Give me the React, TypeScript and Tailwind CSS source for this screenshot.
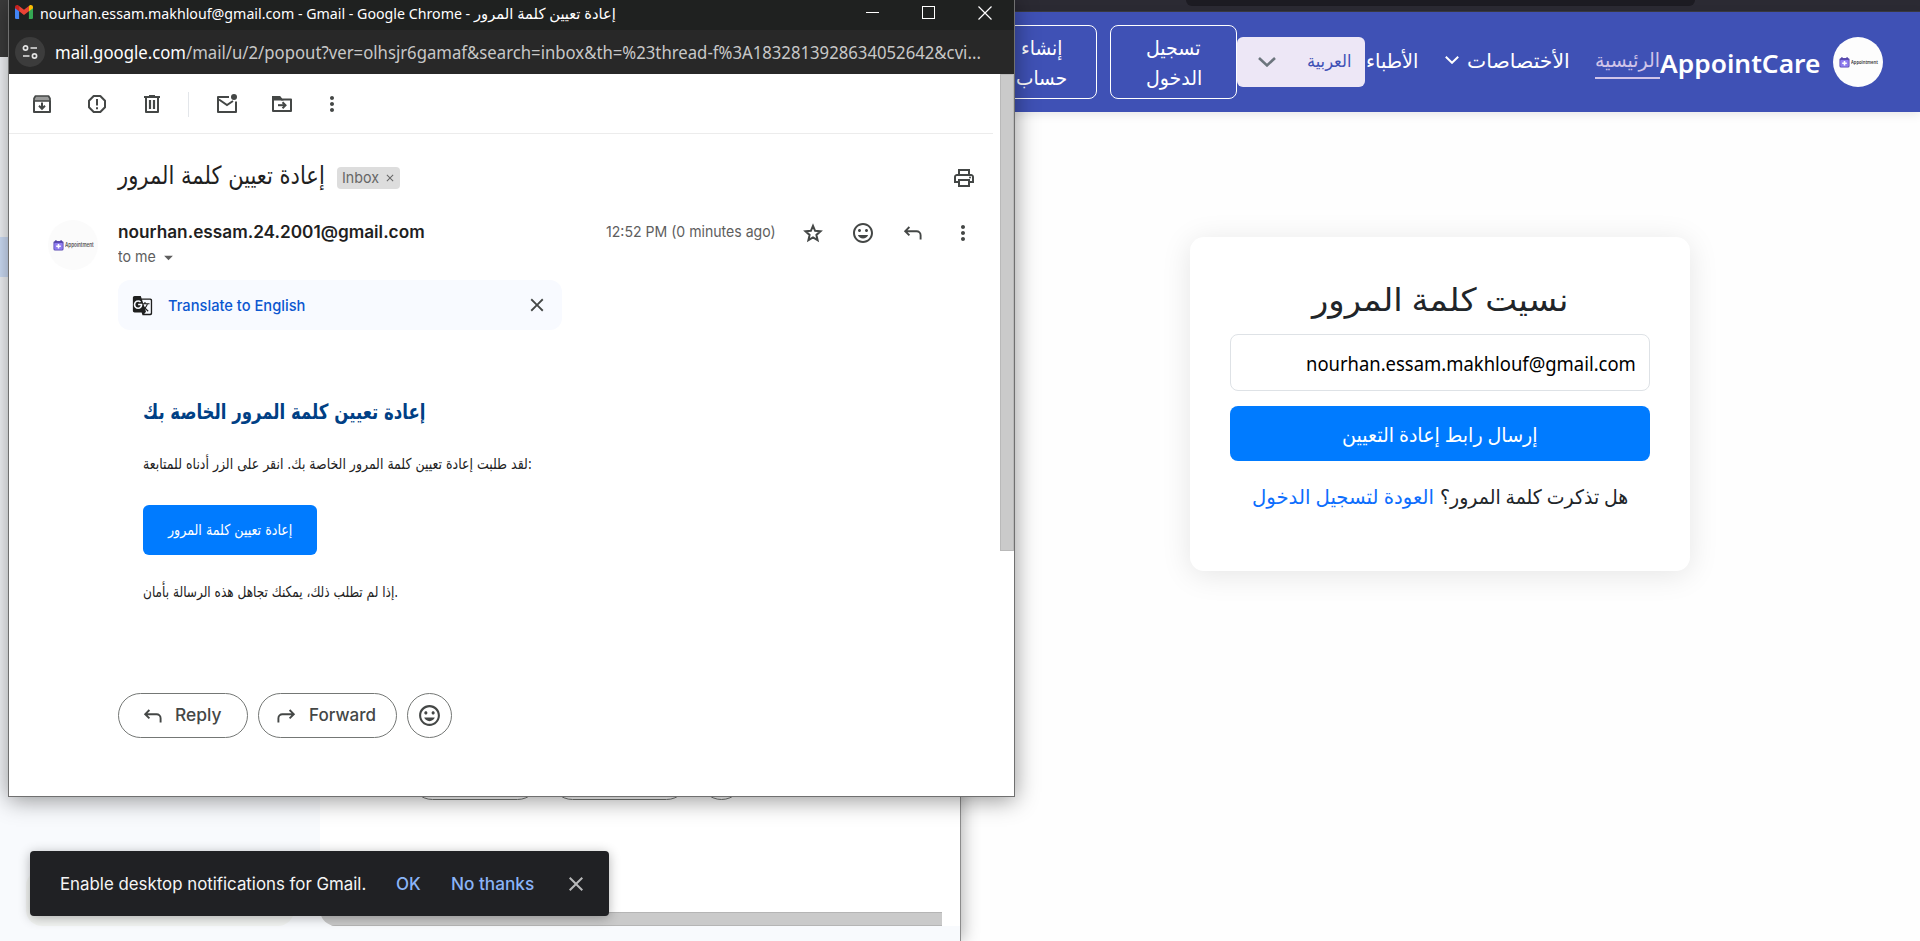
import { useLayoutEffect, useRef, useState, type ReactNode } from 'react';
import {
  MdMoreVert,
  MdOutlinePrint,
  MdOutlineInsertEmoticon,
  MdClose,
  MdArrowDropDown,
  MdGTranslate,
} from 'react-icons/md';

/** One line of text, condensed or widened to fill the width of its box. */
function Fit({ className, children, rtl = false }: { className: string; children: ReactNode; rtl?: boolean }) {
  const box = useRef<HTMLDivElement>(null);
  const line = useRef<HTMLSpanElement>(null);
  const [scale, setScale] = useState(1);
  useLayoutEffect(() => {
    if (box.current && line.current && line.current.offsetWidth > 0) {
      setScale(box.current.clientWidth / line.current.offsetWidth);
    }
  }, []);
  return (
    <div ref={box} dir="ltr" className={`shrink-0 whitespace-nowrap ${className}`}>
      <span
        ref={line}
        dir={rtl ? 'rtl' : 'ltr'}
        className="inline-block origin-left"
        style={{ transform: `scaleX(${scale})` }}
      >
        {children}
      </span>
    </div>
  );
}

function ToolIcon({ className = '', children }: { className?: string; children: ReactNode }) {
  return (
    <svg viewBox="0 0 24 24" className={`h-6 w-6 shrink-0 ${className}`} fill="none" stroke="currentColor" strokeWidth="2">
      {children}
    </svg>
  );
}

function ReplyArrow({ className = '' }: { className?: string }) {
  return (
    <svg viewBox="0 0 20 20" className={`h-5 w-5 shrink-0 ${className}`} fill="none" stroke="currentColor" strokeWidth="1.9">
      <path d="M6.4 4 2.2 8.200l4.200 4.200M2.600 8.200h11a4 4 0 0 1 4 4v4.200" />
    </svg>
  );
}

function BrandMark({ className = '' }: { className?: string }) {
  return (
    <svg viewBox="0 0 12 12" className={className}>
      <rect x="0.5" y="1" width="11" height="10.5" rx="1.8" fill="#5a4bb0" />
      <rect x="1.4" y="3.2" width="9.2" height="7.4" rx="1" fill="#8f7cf0" />
      <path d="M6 4.4v5M3.5 6.9h5" stroke="#fff" strokeWidth="1.7" />
      <path d="M3.2 0v2M8.8 0v2" stroke="#4c3fa0" strokeWidth="1.2" />
    </svg>
  );
}

function GmailMark() {
  return (
    <svg viewBox="0 0 18 14" className="h-[14px] w-[18px] shrink-0">
      <path d="M0 2.2 4.1 5v9H1.2A1.2 1.2 0 0 1 0 12.8z" fill="#4285f4" />
      <path d="M18 2.2 13.9 5v9h2.9a1.2 1.2 0 0 0 1.2-1.2z" fill="#34a853" />
      <path d="M4.1 1 9 4.8 13.9 1v5.2L9 10 4.1 6.2z" fill="#ea4335" />
      <path d="M0 2.2C0 .3 2-.5 3.5.5l.6.5v5.2L0 3.2z" fill="#c5221f" />
      <path d="M18 2.2c0-1.9-2-2.7-3.5-1.7l-.6.5v5.2L18 3.2z" fill="#fbbc04" />
    </svg>
  );
}

function BookingSite() {
  return (
    <div dir="rtl" className="absolute top-0 right-0 flex h-[941px] w-[960px] flex-col bg-[#fefefe] font-['Noto_Sans','DejaVu_Sans',sans-serif]">
      <div className="flex h-3 justify-start border-b border-[#3a3a42] bg-[#2b2a33] pr-[225px]">
        <div className="h-[6px] w-[509px] rounded-b-md bg-[#1c1b22]" />
      </div>
      <nav className="flex h-[100px] shrink-0 items-center bg-[#3f51b5] pr-[37px] text-white shadow-[0_2px_10px_rgba(0,0,0,0.1)]">
        <div className="flex h-[50px] w-[50px] items-center justify-center gap-px rounded-full bg-[#fdfdfd]" dir="ltr">
          <BrandMark className="h-[11px] w-[11px]" />
          <Fit className="w-[27px] text-[6px] leading-none font-semibold text-[#333]">Appointment</Fit>
        </div>
        <Fit className="mr-[13px] w-[160px] pt-px text-[26px] leading-[50px] font-semibold">AppointCare</Fit>
        <div className="h-[34px] w-[65px] border-b-2 border-[#d1c4e9] text-[#d1c4e9]">
          <Fit rtl className="w-[65px] text-[20px] leading-[30px]">الرئيسية</Fit>
        </div>
        <Fit rtl className="mr-[25px] w-[103px] pb-[2px] text-[20px] leading-[34px]">الأختصاصات</Fit>
        <svg viewBox="0 0 14 8" className="mr-2 mb-1 h-2 w-[14px]" fill="none" stroke="currentColor" strokeWidth="2">
          <path d="m.8.8 6.2 6 6.2-6" />
        </svg>
        <Fit rtl className="mr-[27px] w-[52px] pb-[2px] text-[20px] leading-[34px]">الأطباء</Fit>
        <div className="mr-px flex h-[50px] w-[128px] items-center justify-between rounded-md bg-[#ede7f6] pr-[14px] pl-[21px] text-[#3f51b5]">
          <Fit rtl className="w-[44px] pb-[3px] text-[17px] leading-[34px]">العربية</Fit>
          <svg viewBox="0 0 18 10" className="h-[10px] w-[18px] text-[#6c757d]" fill="none" stroke="currentColor" strokeWidth="2.6">
            <path d="m1 1 8 7.4L17 1" />
          </svg>
        </div>
        <button className="flex h-[74px] w-[127px] flex-col items-center justify-center rounded-lg border border-white pt-[2px] text-[20px] leading-[30px]">
          <Fit rtl className="w-[55px]">تسجيل</Fit>
          <Fit rtl className="w-[56px]">الدخول</Fit>
        </button>
        <button className="mr-[13px] flex h-[74px] w-[112px] flex-col items-center justify-center rounded-lg border border-white pt-[2px] text-[20px] leading-[30px]">
          <Fit rtl className="w-[41px]">إنشاء</Fit>
          <Fit rtl className="w-[51px]">حساب</Fit>
        </button>
      </nav>
      <main className="flex pt-[125px] pr-[230px]">
        <section className="flex h-[334px] w-[500px] flex-col items-center rounded-[14px] bg-white px-10 pt-[39px] shadow-[0_4px_30px_rgba(0,0,0,0.1)]">
          <Fit rtl className="h-[58px] w-[256px] text-[32px] leading-[46px] text-[#212529]">نسيت كلمة المرور</Fit>
          <div dir="ltr" className="flex h-[57px] w-full items-center justify-end rounded-lg border border-[#dee2e6] pt-[2px] pr-[13px]">
            <Fit className="w-[330px] text-[20px] text-black">nourhan.essam.makhlouf@gmail.com</Fit>
          </div>
          <button className="mt-[15px] flex h-[55px] w-full items-center justify-center rounded-lg bg-[#007bff] pt-[2px] text-white">
            <Fit rtl className="w-[196px] text-[20px] leading-[34px]">إرسال رابط إعادة التعيين</Fit>
          </button>
          <div className="mt-[19px] flex gap-[6px] text-[20px] leading-[34px]">
            <Fit rtl className="w-[188px] text-[#212529]">هل تذكرت كلمة المرور؟</Fit>
            <Fit rtl className="w-[182px] text-[#0d6efd]">العودة لتسجيل الدخول</Fit>
          </div>
        </section>
      </main>
    </div>
  );
}

function InboxWindow() {
  return (
    <div className="absolute top-0 left-0 flex h-[941px] w-[961px] flex-col border-r border-[#8c8c8c] bg-[#f8fafd] shadow-[2px_0_16px_rgba(0,0,0,0.3)]">
      <div className="h-[57px] shrink-0 bg-[#3c3c3c]" />
      <div className="flex h-[869px]">
        <div className="flex w-[320px] flex-col justify-between pt-[180px]">
          <div className="h-10 bg-[#d3e3fd]" />
          <div className="ml-[26px] h-14 w-[268px] rounded-2xl bg-[#f2f4f2]" />
        </div>
        <div className="flex flex-1 flex-col justify-end overflow-hidden rounded-bl-2xl bg-white">
          <div className="mb-28 ml-[90px] flex gap-[10px]">
            <div className="h-[45px] w-[130px] rounded-full border border-[#747775]" />
            <div className="h-[45px] w-[139px] rounded-full border border-[#747775]" />
            <div className="h-[45px] w-[45px] rounded-full border border-[#747775]" />
          </div>
          <div className="mr-[18px] h-[14px] shrink-0 border-y border-[#b5b5b5] bg-[#cacaca]" />
        </div>
      </div>
    </div>
  );
}

function MailToolbar() {
  return (
    <div className="mr-[7px] flex h-[60px] shrink-0 items-center border-b border-[#ececec] pt-px pl-[20.5px] text-[24px]">
      <ToolIcon>
        <path d="M4 8.500V20h16V8.500" strokeLinejoin="round" />
        <path d="M5.500 4h13L20 6.500V9H4V6.500z" fill="#9a9b9a" strokeWidth="1.700" strokeLinejoin="round" />
        <path d="M12 10.500v5.500" />
        <path d="m9 13.800 3 3 3-3" />
      </ToolIcon>
      <ToolIcon className="ml-[31px]">
        <path d="M8.700 4h6.600L20 8.700v6.600L15.300 20H8.700L4 15.300V8.700z" strokeLinejoin="round" />
        <path d="M12 7v6.500M12 15.200v2" />
      </ToolIcon>
      <ToolIcon className="ml-[31px]">
        <path d="M6 5.500V20h12V5.500M4 5h16M9 4h6" strokeLinejoin="round" />
        <path d="M10 8v9M14 8v9" strokeWidth="2.200" />
      </ToolIcon>
      <div className="ml-[24px] h-[25px] w-px bg-[#e3e6ea]" />
      <ToolIcon className="ml-[26px]">
        <path d="M14 5H3v15h18V9.500" strokeLinejoin="round" />
        <path d="m4 7.500 8 5.500 6-4" />
        <circle cx="19" cy="5" r="3" fill="currentColor" stroke="none" />
      </ToolIcon>
      <ToolIcon className="ml-[31px]">
        <path d="M3 19V5h6.500l2 2.500H21V19z" strokeLinejoin="round" />
        <path d="M3 5h6.500l2 2.500H3z" fill="currentColor" />
        <path d="M8 13.200h7" />
        <path d="m12.500 10.200 3 3-3 3" />
      </ToolIcon>
      <MdMoreVert className="ml-[26px]" />
    </div>
  );
}

function MailPopup() {
  return (
    <div className="absolute top-0 left-[8px] flex h-[797px] w-[1007px] flex-col border-x border-b border-[#707070] bg-white shadow-[0_3px_22px_rgba(0,0,0,0.42)]">
      <div className="flex h-[30px] shrink-0 items-center bg-[#1f2120] pr-[22px] pl-[6px] text-white">
        <div className="-mt-[6px] flex">
          <GmailMark />
        </div>
        <div className="-mt-[5px] ml-[7px] flex gap-1 font-['Noto_Sans','DejaVu_Sans',sans-serif] text-[15px] leading-[24px]">
          <Fit className="w-[430px]">nourhan.essam.makhlouf@gmail.com - Gmail - Google Chrome -</Fit>
          <Fit rtl className="w-[142px]">إعادة تعيين كلمة المرور</Fit>
        </div>
        <div className="-mt-[5px] ml-auto flex items-center gap-[43px]">
          <div className="h-px w-[13px] bg-white" />
          <div className="h-[13px] w-[13px] border border-white" />
          <svg viewBox="0 0 14 14" className="h-[14px] w-[14px]" stroke="#fff" strokeWidth="1.2">
            <path d="m.5.5 13 13M13.500.5l-13 13" />
          </svg>
        </div>
      </div>
      <div className="flex h-[44px] shrink-0 items-center bg-[#282828] pl-[6px] font-['Noto_Sans',sans-serif]">
        <div className="flex h-[30px] w-[30px] items-center justify-center rounded-full bg-[#3c3c3c]">
          <svg viewBox="0 0 16 16" className="h-4 w-4" fill="none" stroke="#e3e3e3" strokeWidth="1.7">
            <circle cx="3.500" cy="4" r="2.100" />
            <path d="M8.500 4H15M1 12h6.500" />
            <circle cx="12.500" cy="12" r="2.100" />
          </svg>
        </div>
        <Fit className="ml-[10px] w-[926px] pt-px text-[18px] text-[#c7c7c7]">
          <span className="text-white">mail.google.com</span>
          /mail/u/2/popout?ver=olhsjr6gamaf&amp;search=inbox&amp;th=%23thread-f%3A1832813928634052642&amp;cvi...
        </Fit>
      </div>
      <div className="flex flex-1">
        <div className="flex flex-1 flex-col font-['Inter',sans-serif] text-[#444746]">
          <MailToolbar />
          <div className="flex h-[86px] items-center pt-[2px] pr-[24px] pl-[109px]">
            <Fit rtl className="-mt-1 w-[207px] font-['DejaVu_Sans',sans-serif] text-[25px] leading-[36px] text-[#1f1f1f]">
              إعادة تعيين كلمة المرور
            </Fit>
            <div className="ml-3 flex h-[22px] w-[63px] items-center rounded bg-[#ddd] pl-[5px] text-[#666]">
              <Fit className="w-[37px] text-[15px]">Inbox</Fit>
              <MdClose className="ml-[5px] text-[12px]" />
            </div>
            <MdOutlinePrint className="ml-auto text-[24px]" />
          </div>
          <div className="flex h-[50px] pr-[25px] pl-[39px]">
            <div className="flex w-[50px] items-center justify-center gap-px rounded-full bg-[#fbfbfb]">
              <BrandMark className="h-[11px] w-[11px]" />
              <Fit className="w-[29px] text-[6px] leading-none font-semibold text-[#555]">Appointment</Fit>
            </div>
            <div className="ml-5 flex flex-col">
              <Fit className="h-[25px] w-[307px] text-[17px] leading-[25px] font-semibold text-[#1f1f1f]">
                nourhan.essam.24.2001@gmail.com
              </Fit>
              <div className="flex h-[25px] items-center text-[#5e5e5e]">
                <Fit className="w-[38px] text-[15px]">to me</Fit>
                <MdArrowDropDown className="ml-[2px] text-[21px]" />
              </div>
            </div>
            <div className="ml-auto flex h-[25px] items-center text-[24px]">
              <Fit className="w-[170px] text-[15px] text-[#5e5e5e]">12:52 PM (0 minutes ago)</Fit>
              <ToolIcon className="ml-[25px]">
                <path d="m12 4.800 2.100 5 5.400.5-4.100 3.600 1.200 5.300-4.600-2.800-4.600 2.800 1.200-5.300-4.100-3.600 5.400-.5z" />
              </ToolIcon>
              <MdOutlineInsertEmoticon className="ml-[26px]" />
              <ReplyArrow className="ml-[28px]" />
              <MdMoreVert className="ml-[28px]" />
            </div>
          </div>
          <div className="mt-[10px] ml-[109px] flex h-[50px] w-[444px] items-center rounded-xl bg-[#f8faff] px-[14px] text-[#1f1f1f]">
            <MdGTranslate className="text-[21px]" />
            <Fit className="ml-[15px] w-[137px] pt-[2px] text-[15px] font-medium text-[#0b57d0]">Translate to English</Fit>
            <MdClose className="ml-auto text-[22px] text-[#444746]" />
          </div>
          <article className="ml-[134px] flex flex-col items-start font-['DejaVu_Sans',sans-serif] text-[#222]">
            <Fit rtl className="mt-[57px] w-[282px] text-[21px] leading-[50px] font-bold text-[#004085]">
              إعادة تعيين كلمة المرور الخاصة بك
            </Fit>
            <Fit className="mt-3 w-[389px] text-[15px] leading-[30px]">
              لقد طلبت إعادة تعيين كلمة المرور الخاصة بك. انقر على الزر أدناه للمتابعة:
            </Fit>
            <button className="mt-[26px] flex h-[50px] w-[174px] items-center justify-center rounded-md bg-[#007bff] text-white">
              <Fit rtl className="w-[124px] text-[15px]">إعادة تعيين كلمة المرور</Fit>
            </button>
            <Fit className="mt-[22px] w-[255px] text-[15px] leading-[30px]">إذا لم تطلب ذلك، يمكنك تجاهل هذه الرسالة بأمان.</Fit>
          </article>
          <div className="mt-[86px] ml-[109px] flex gap-[10px] text-[17px] font-medium">
            <button className="flex h-[45px] w-[130px] items-center rounded-full border border-[#747775] pl-6">
              <ReplyArrow />
              <Fit className="ml-3 w-[46px]">Reply</Fit>
            </button>
            <button className="flex h-[45px] w-[139px] items-center rounded-full border border-[#747775] pl-[17px]">
              <ReplyArrow className="-scale-x-100" />
              <Fit className="ml-[13px] w-[67px]">Forward</Fit>
            </button>
            <button className="flex h-[45px] w-[45px] items-center justify-center rounded-full border border-[#747775]">
              <MdOutlineInsertEmoticon className="text-[25px]" />
            </button>
          </div>
        </div>
        <div className="w-[14px]">
          <div className="h-[477px] border border-[#b9b9b9] bg-[#cacaca]" />
        </div>
      </div>
    </div>
  );
}

function NotificationToast() {
  return (
    <div className="absolute top-[851px] left-[30px] flex h-[65px] w-[579px] items-center rounded bg-[#202124] pl-[30px] font-['Inter',sans-serif] text-[17px] font-medium text-[#8ab4f8] shadow-[0_2px_12px_rgba(0,0,0,0.3)]">
      <Fit className="w-[306px] pt-[2px] font-normal text-[#f5f5f5]">Enable desktop notifications for Gmail.</Fit>
      <Fit className="ml-[30px] w-[25px] pt-[2px]">OK</Fit>
      <Fit className="ml-[30px] w-[83px] pt-[2px]">No thanks</Fit>
      <MdClose className="ml-[30px] text-[24px] text-[#b8b9ba]" />
    </div>
  );
}

export default function App() {
  return (
    <div className="relative h-[941px] w-[1920px] overflow-hidden bg-white">
      <BookingSite />
      <InboxWindow />
      <MailPopup />
      <NotificationToast />
    </div>
  );
}
